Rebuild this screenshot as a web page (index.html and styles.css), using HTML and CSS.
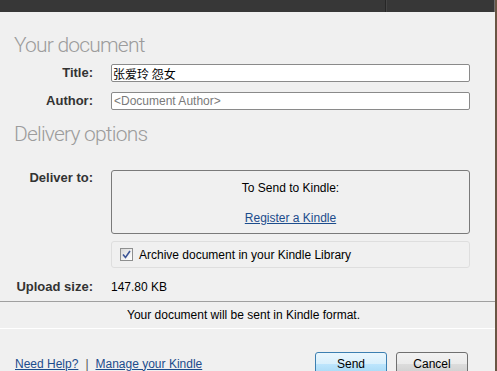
FILE: index.html
```html
<!DOCTYPE html>
<html lang="en">
<head>
    <meta charset="UTF-8">
    <title>Send to Kindle</title>
    <link rel="stylesheet" href="styles.css">
</head>
<body>
    <div class="window">
        <div class="topbar">
            <div class="topbar-left"></div>
            <div class="topbar-right"></div>
        </div>

        <div class="content">
            <h2 class="section-title first">Your document</h2>

            <div class="field-row title-row">
                <label class="field-label">Title:</label>
                <input class="text-input cjk" type="text" value="张爱玲 怨女">
            </div>
            <div class="field-row author-row">
                <label class="field-label">Author:</label>
                <input class="text-input" type="text" placeholder="<Document Author>">
            </div>

            <h2 class="section-title second">Delivery options</h2>

            <div class="field-row deliver-row">
                <label class="field-label">Deliver to:</label>
                <div class="deliver-col">
                    <div class="deliver-box">
                        <div class="deliver-text">To Send to Kindle:</div>
                        <a class="link" href="#">Register a Kindle</a>
                    </div>
                    <div class="archive-box">
                        <span class="checkbox">
                            <svg width="9" height="9" viewBox="0 0 9 9">
                                <path d="M1 4.5 L3.5 7.5 L8 1" fill="none" stroke="#3c5596" stroke-width="1.6"/>
                            </svg>
                        </span>
                        <span>Archive document in your Kindle Library</span>
                    </div>
                </div>
            </div>

            <div class="field-row upload-row">
                <label class="field-label">Upload size:</label>
                <span class="upload-value">147.80 KB</span>
            </div>
        </div>

        <div class="format-note">Your document will be sent in Kindle format.</div>

        <div class="footer">
            <div class="footer-links">
                <a class="link" href="#">Need Help?</a>
                <span class="link-sep">|</span>
                <a class="link" href="#">Manage your Kindle</a>
            </div>
            <div class="buttons">
                <button class="btn btn-primary">Send</button>
                <button class="btn">Cancel</button>
            </div>
        </div>
    </div>
</body>
</html>
```

FILE: styles.css
```css
body {
    margin: 0;
    background-color: #f0f0f0;
    font-family: "Liberation Sans", Arial, sans-serif;
    font-size: 12px;
    color: #000;
}

.window {
    width: 497px;
    height: 371px;
    box-sizing: border-box;
    border-right: 2px solid #6a5644;
    background-color: #f0f0f0;
    overflow: hidden;
}

/* Dark strip along the top */
.topbar {
    display: flex;
    height: 12px;
    background-color: #373737;
}

.topbar-left {
    width: 385px;
    border-right: 1px solid #262626;
}

.topbar-right {
    flex: 1;
    border-left: 1px solid #444;
    border-right: 1px solid #6e6e6e;
}

.content {
    padding-right: 25px;
}

.section-title {
    margin: 0;
    padding-left: 14px;
    font-family: Roboto, "Liberation Sans", sans-serif;
    font-weight: 300;
    font-size: 21px;
    line-height: 24px;
    letter-spacing: -0.8px;
    color: #9c9c9c;
}

.section-title.first {
    margin-top: 21px;
}

.section-title.second {
    margin-top: 12px;
}

.field-row {
    display: grid;
    grid-template-columns: 93px 1fr;
    column-gap: 18px;
    align-items: center;
}

.title-row {
    margin-top: 7px;
}

.author-row {
    margin-top: 10px;
}

.field-label {
    text-align: right;
    font-weight: bold;
    font-size: 13px;
    color: #333;
    line-height: 14px;
}

.text-input {
    box-sizing: border-box;
    width: 100%;
    height: 18px;
    margin: 0;
    padding: 0 2px;
    border: 1px solid #8a8a8a;
    border-radius: 2px;
    background-color: #fff;
    font-family: "Liberation Sans", Arial, sans-serif;
    font-size: 12px;
    color: #000;
    outline: none;
}

.text-input::placeholder {
    color: #7a7a7a;
}

.text-input.cjk {
    padding-left: 1px;
    font-family: "Noto Sans CJK SC", sans-serif;
    font-size: 12px;
}

.deliver-row {
    margin-top: 24px;
    align-items: start;
}

.deliver-row .field-label {
    padding-top: 1px;
}

.deliver-box {
    box-sizing: border-box;
    height: 64px;
    padding-top: 10px;
    border: 1px solid #7a7a7a;
    border-radius: 3px;
    text-align: center;
    line-height: 14px;
}

.deliver-text {
    margin-bottom: 16px;
}

.link {
    color: #1c4c8c;
    text-decoration: underline;
}

.archive-box {
    display: flex;
    align-items: center;
    gap: 6px;
    box-sizing: border-box;
    height: 27px;
    margin-top: 7px;
    padding-left: 8px;
    border: 1px solid #dedede;
    border-radius: 3px;
}

.checkbox {
    display: flex;
    align-items: center;
    justify-content: center;
    box-sizing: border-box;
    width: 13px;
    height: 13px;
    border: 1px solid #8e8f8f;
    background: linear-gradient(135deg, #d8d8d8, #f6f6f6 70%, #fff);
}

.upload-row {
    margin-top: 12px;
    line-height: 14px;
}

.format-note {
    height: 26px;
    margin-top: 7px;
    padding-right: 8px;
    border-top: 1px solid #a0a0a0;
    border-bottom: 1px solid #fff;
    text-align: center;
    line-height: 26px;
}

.footer {
    display: flex;
    justify-content: space-between;
    align-items: center;
    padding: 23px 27px 0 15px;
}

.footer-links {
    display: flex;
    gap: 7px;
    align-items: center;
}

.link-sep {
    color: #555;
}

.buttons {
    display: flex;
    gap: 9px;
}

.btn {
    box-sizing: border-box;
    width: 72px;
    height: 23px;
    padding: 0;
    border: 1px solid #707070;
    border-radius: 3px;
    background: linear-gradient(#f2f2f2, #ebebeb 50%, #dddddd 50%, #cfcfcf);
    font-family: "Liberation Sans", Arial, sans-serif;
    font-size: 12px;
    color: #000;
}

.btn-primary {
    border-color: #3c7fb1;
    background: linear-gradient(#eaf6fd, #d9f0fc 50%, #bee6fd 50%, #a7d9f5);
}
```
